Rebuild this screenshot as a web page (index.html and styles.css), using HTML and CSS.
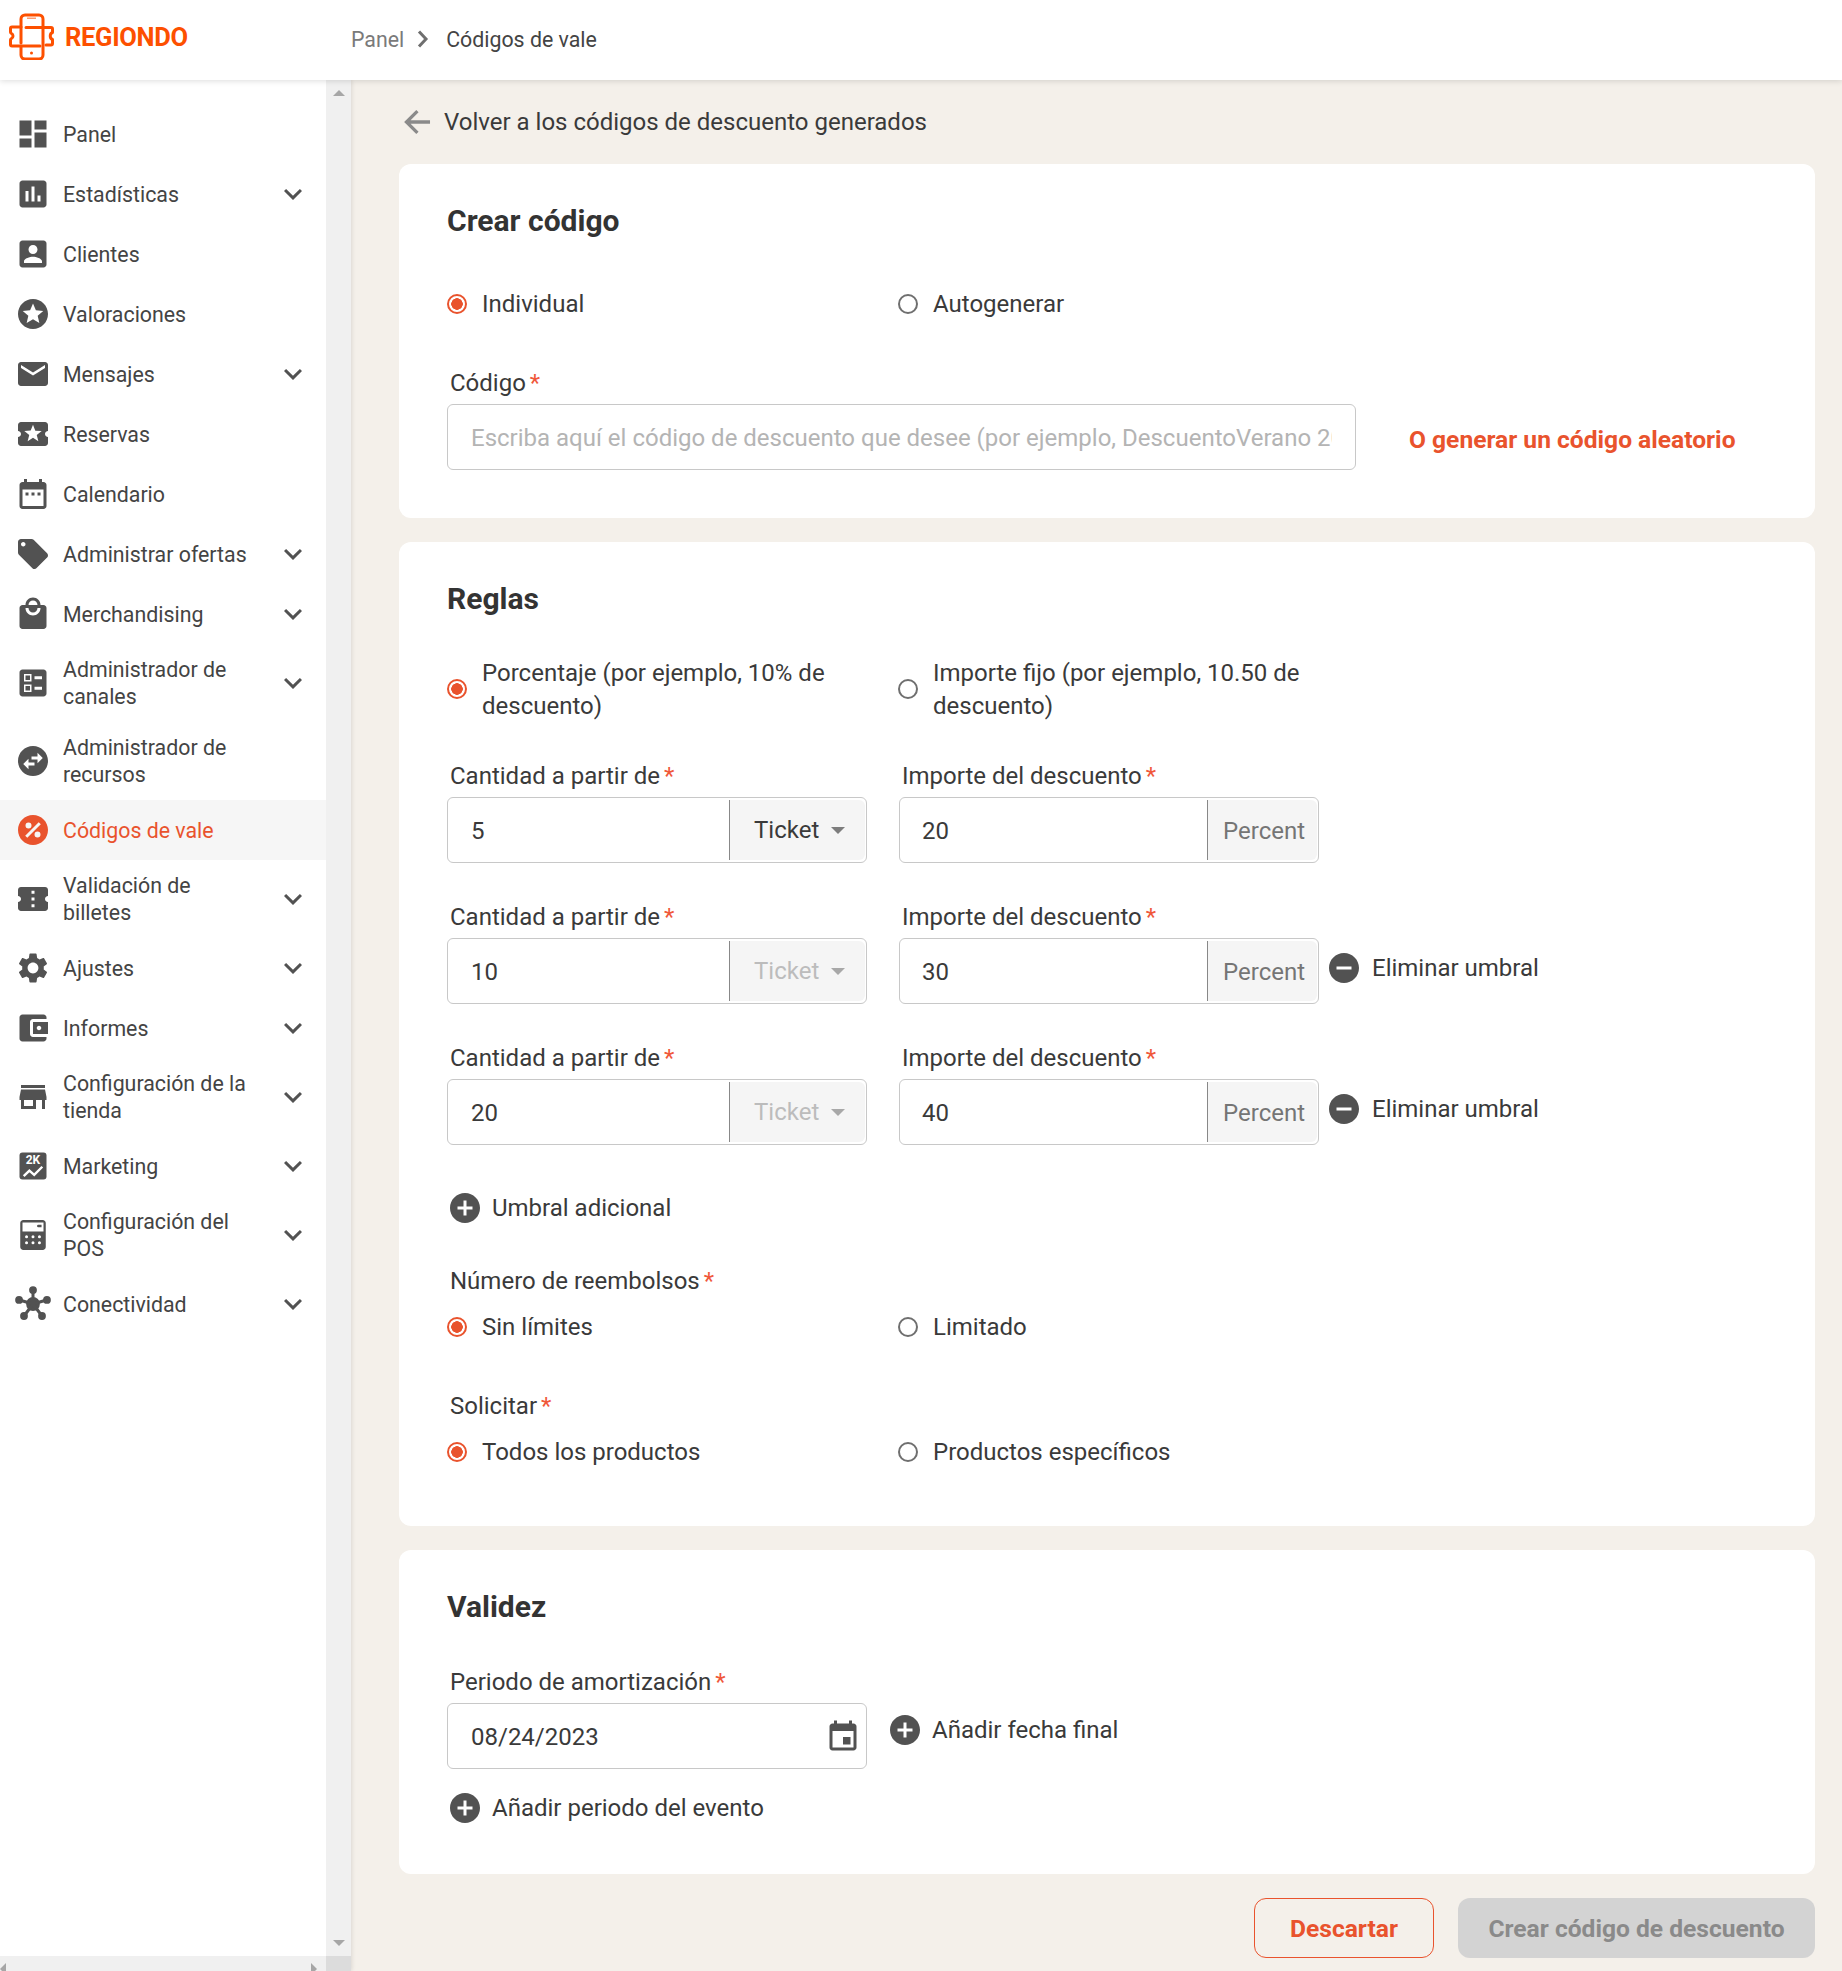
FILE: index.html
```html
<!DOCTYPE html>
<html lang="es">
<head>
<meta charset="utf-8">
<title>Códigos de vale</title>
<link rel="stylesheet" href="styles.css">
</head>
<body>
<svg class="sprite" width="0" height="0" aria-hidden="true">
  <symbol id="i-dashboard" viewBox="0 0 24 24"><path d="M3 13h8V3H3v10zm0 8h8v-6H3v6zm10 0h8V11h-8v10zm0-18v6h8V3h-8z"/></symbol>
  <symbol id="i-chart" viewBox="0 0 24 24"><path d="M19 3H5c-1.1 0-2 .9-2 2v14c0 1.1.9 2 2 2h14c1.1 0 2-.9 2-2V5c0-1.1-.9-2-2-2zM9 17H7v-7h2v7zm4 0h-2V7h2v10zm4 0h-2v-4h2v4z"/></symbol>
  <symbol id="i-account" viewBox="0 0 24 24"><path d="M3 5v14c0 1.1.89 2 2 2h14c1.1 0 2-.9 2-2V5c0-1.1-.9-2-2-2H5c-1.11 0-2 .9-2 2zm12 4c0 1.66-1.34 3-3 3s-3-1.34-3-3 1.34-3 3-3 3 1.34 3 3zm-9 8c0-2 4-3.1 6-3.1s6 1.1 6 3.1v1H6v-1z"/></symbol>
  <symbol id="i-stars" viewBox="0 0 24 24"><path d="M11.99 2C6.47 2 2 6.48 2 12s4.47 10 9.99 10C17.52 22 22 17.52 22 12S17.52 2 11.99 2zm4.24 16L12 15.45 7.77 18l1.12-4.81-3.73-3.23 4.92-.42L12 5l1.92 4.53 4.92.42-3.73 3.23L16.23 18z"/></symbol>
  <symbol id="i-email" viewBox="0 0 24 24"><path d="M20 4H4c-1.1 0-1.99.9-1.99 2L2 18c0 1.1.9 2 2 2h16c1.1 0 2-.9 2-2V6c0-1.1-.9-2-2-2zm0 4l-8 5-8-5V6l8 5 8-5v2z"/></symbol>
  <symbol id="i-activity" viewBox="0 0 24 24"><path d="M20 12c0-1.1.9-2 2-2V6c0-1.1-.9-2-2-2H4c-1.1 0-1.99.9-1.99 2v4c1.1 0 1.99.9 1.99 2s-.89 2-2 2v4c0 1.1.9 2 2 2h16c1.1 0 2-.9 2-2v-4c-1.1 0-2-.9-2-2zm-4.42 4.8L12 14.5l-3.58 2.3 1.08-4.12-3.29-2.69 4.24-.25L12 5.8l1.54 3.95 4.24.25-3.29 2.69 1.09 4.11z"/></symbol>
  <symbol id="i-range" viewBox="0 0 24 24"><path d="M9 11H7v2h2v-2zm4 0h-2v2h2v-2zm4 0h-2v2h2v-2zm2-7h-1V2h-2v2H8V2H6v2H5c-1.11 0-1.99.9-1.99 2L3 20c0 1.1.89 2 2 2h14c1.1 0 2-.9 2-2V6c0-1.1-.9-2-2-2zm0 16H5V9h14v11z"/></symbol>
  <symbol id="i-offer" viewBox="0 0 24 24"><path d="M21.41 11.58l-9-9C12.05 2.22 11.55 2 11 2H4c-1.1 0-2 .9-2 2v7c0 .55.22 1.05.59 1.42l9 9c.36.36.86.58 1.41.58.55 0 1.05-.22 1.41-.59l7-7c.37-.36.59-.86.59-1.41 0-.55-.23-1.06-.59-1.42zM5.5 7C4.67 7 4 6.33 4 5.5S4.67 4 5.5 4 7 4.67 7 5.5 6.33 7 5.5 7z"/></symbol>
  <symbol id="i-mall" viewBox="0 0 24 24"><path d="M19 6h-2c0-2.76-2.24-5-5-5S7 3.24 7 6H5c-1.1 0-1.99.9-1.99 2L3 20c0 1.1.9 2 2 2h14c1.1 0 2-.9 2-2V8c0-1.1-.9-2-2-2zm-7-3c1.66 0 3 1.34 3 3H9c0-1.66 1.34-3 3-3zm0 10c-2.76 0-5-2.24-5-5h2c0 1.66 1.34 3 3 3s3-1.34 3-3h2c0 2.76-2.24 5-5 5z"/></symbol>
  <symbol id="i-ballot" viewBox="0 0 24 24"><path fill-rule="evenodd" d="M13 9.5h5v-2h-5v2zm0 7h5v-2h-5v2zm6 4.5H5c-1.1 0-2-.9-2-2V5c0-1.1.9-2 2-2h14c1.1 0 2 .9 2 2v14c0 1.1-.9 2-2 2zM6 11h5V6H6v5zm1-4h3v3H7V7zM6 18h5v-5H6v5zm1-4h3v3H7v-3z"/></symbol>
  <symbol id="i-swap" viewBox="0 0 24 24"><path d="M22 12c0-5.52-4.48-10-10-10S2 6.48 2 12s4.48 10 10 10 10-4.48 10-10zm-7-5.5l3.5 3.5-3.5 3.5V11h-4V9h4V6.5zm-6 11L5.5 14 9 10.5V13h4v2H9v2.5z"/></symbol>
  <symbol id="i-percent" viewBox="0 0 24 24"><path fill-rule="evenodd" d="M12 2C6.48 2 2 6.48 2 12s4.48 10 10 10 10-4.48 10-10S17.52 2 12 2zM9 7a2 2 0 1 1 0 4 2 2 0 0 1 0-4zm6 6a2 2 0 1 1 0 4 2 2 0 0 1 0-4zM8.2 17.2l-1.4-1.4 9-9 1.4 1.4-9 9z"/></symbol>
  <symbol id="i-ticket" viewBox="0 0 24 24"><path d="M22 10V6c0-1.11-.9-2-2-2H4c-1.1 0-1.99.89-1.99 2v4c1.1 0 1.99.9 1.99 2s-.89 2-2 2v4c0 1.1.9 2 2 2h16c1.1 0 2-.9 2-2v-4c-1.1 0-2-.9-2-2s.9-2 2-2zm-9 7.5h-2v-2h2v2zm0-4.5h-2v-2h2v2zm0-4.5h-2v-2h2v2z"/></symbol>
  <symbol id="i-settings" viewBox="0 0 24 24"><path d="M19.14 12.94c.04-.3.06-.61.06-.94 0-.32-.02-.64-.07-.94l2.03-1.58c.18-.14.23-.41.12-.61l-1.92-3.32c-.12-.22-.37-.29-.59-.22l-2.39.96c-.5-.38-1.03-.7-1.62-.94l-.36-2.54c-.04-.24-.24-.41-.48-.41h-3.84c-.24 0-.43.17-.47.41l-.36 2.54c-.59.24-1.13.57-1.62.94l-2.39-.96c-.22-.08-.47 0-.59.22L2.74 8.87c-.12.21-.08.47.12.61l2.03 1.58c-.05.3-.09.63-.09.94s.02.64.07.94l-2.03 1.58c-.18.14-.23.41-.12.61l1.92 3.32c.12.22.37.29.59.22l2.39-.96c.5.38 1.03.7 1.62.94l.36 2.54c.05.24.24.41.48.41h3.84c.24 0 .44-.17.47-.41l.36-2.54c.59-.24 1.13-.56 1.62-.94l2.39.96c.22.08.47 0 .59-.22l1.92-3.32c.12-.22.07-.47-.12-.61l-2.01-1.58zM12 15.6c-1.98 0-3.6-1.62-3.6-3.6s1.62-3.6 3.6-3.6 3.6 1.62 3.6 3.6-1.62 3.6-3.6 3.6z"/></symbol>
  <symbol id="i-wallet" viewBox="0 0 24 24"><path d="M21 18v1c0 1.1-.9 2-2 2H5c-1.11 0-2-.9-2-2V5c0-1.1.89-2 2-2h14c1.1 0 2 .9 2 2v1h-9c-1.11 0-2 .9-2 2v8c0 1.1.89 2 2 2h9zm-9-2h10V8H12v8zm4-2.5c-.83 0-1.5-.67-1.5-1.5s.67-1.5 1.5-1.5 1.5.67 1.5 1.5-.67 1.5-1.5 1.5z"/></symbol>
  <symbol id="i-store" viewBox="0 0 24 24"><path d="M20 4H4v2h16V4zm1 10v-2l-1-5H4l-1 5v2h1v6h10v-6h4v6h2v-6h1zm-9 4H6v-4h6v4z"/></symbol>
  <symbol id="i-calc" viewBox="0 0 24 24"><path fill-rule="evenodd" d="M5.500 2h13c1.100 0 2 .9 2 2v16c0 1.100-.9 2-2 2h-13c-1.100 0-2-.9-2-2V4c0-1.100.9-2 2-2zm-.5 1.700v6h14v-6H5zm10.500 1.500h2.200v1.600h-2.200a.8.8 0 0 1 0-1.600zM7.700 12.200a1 1 0 1 0 0 2 1 1 0 0 0 0-2zm4.300 0a1 1 0 1 0 0 2 1 1 0 0 0 0-2zm4.300 0a1 1 0 1 0 0 2 1 1 0 0 0 0-2zm-8.600 4a1 1 0 1 0 0 2 1 1 0 0 0 0-2zm4.300 0a1 1 0 1 0 0 2 1 1 0 0 0 0-2zm4.300 0a1 1 0 1 0 0 2 1 1 0 0 0 0-2z"/></symbol>
  <symbol id="i-hub" viewBox="0 0 24 24"><circle cx="12" cy="12" r="4.600"/><circle cx="12" cy="2.700" r="2.600"/><circle cx="2.700" cy="9.300" r="2.600"/><circle cx="21.300" cy="9.300" r="2.600"/><circle cx="6" cy="20" r="2.600"/><circle cx="18" cy="20" r="2.600"/><path d="M12 3v9M3 9.300l9 2.700M21 9.300l-9 2.700M6 20l6-8M18 20l-6-8" fill="none" stroke="#525252" stroke-width="2"/></symbol>
  <symbol id="i-chevron" viewBox="0 0 24 24"><path d="M16.59 8.59L12 13.17 7.41 8.59 6 10l6 6 6-6z"/></symbol>
  <symbol id="i-plus" viewBox="0 0 24 24"><path fill-rule="evenodd" d="M12 2C6.48 2 2 6.48 2 12s4.48 10 10 10 10-4.48 10-10S17.52 2 12 2zm5 11h-4v4h-2v-4H7v-2h4V7h2v4h4v2z"/></symbol>
  <symbol id="i-minus" viewBox="0 0 24 24"><path fill-rule="evenodd" d="M12 2C6.48 2 2 6.48 2 12s4.48 10 10 10 10-4.48 10-10S17.52 2 12 2zm5 11H7v-2h10v2z"/></symbol>
  <symbol id="i-event" viewBox="0 0 24 24"><path d="M17 12h-5v5h5v-5zM16 1v2H8V1H6v2H5c-1.110 0-1.990.9-1.990 2L3 19c0 1.100.89 2 2 2h14c1.100 0 2-.9 2-2V5c0-1.100-.9-2-2-2h-1V1h-2zm3 18H5V8h14v11z"/></symbol>
</svg>

<header class="topbar">
  <div class="brand">
    <svg class="brand-mark" viewBox="0 0 60 60" aria-hidden="true">
      <g fill="none" stroke="#fd5000" stroke-width="3" stroke-linecap="round" stroke-linejoin="round">
        <path d="M21 43V19a4 4 0 0 1 4-4h14a4 4 0 0 1 4 4v7"/>
        <path d="M43 29v26a4 4 0 0 1-4 4H25a4 4 0 0 1-4-4v-8"/>
        <path d="M21 27h-9a1.500 1.500 0 0 0-1.500 1.500v3.500a2 2 0 0 0 1 1.500c2 1 2 4 0 5a2 2 0 0 0-1 1.500v4.500a1.500 1.500 0 0 0 1.500 1.500h28"/>
        <path d="M26 27.500h25a1.500 1.500 0 0 1 1.500 1.500v3.500c-3 1-3 6 0 7v4a1.500 1.500 0 0 1-1.500 1.500h-5"/>
      </g>
      <rect x="27" y="17.500" width="9" height="1.500" fill="#fd9a70"/>
      <circle cx="31.500" cy="53" r="1.500" fill="#fd5000"/>
    </svg>
    <span class="brand-name">REGIONDO</span>
  </div>
  <nav class="crumbs">
    <span class="crumb-root">Panel</span>
    <svg class="crumb-sep" viewBox="0 0 12 18" aria-hidden="true"><path d="M2 1.500l7 7.500-7 7.500" fill="none" stroke="#6f6f6f" stroke-width="3"/></svg>
    <span>Códigos de vale</span>
  </nav>
</header>

<div class="shell">
  <aside class="sidebar">
    <ul class="nav">
      <li class="nav-item"><svg class="nav-icon"><use href="#i-dashboard"/></svg><span class="nav-text">Panel</span></li>
      <li class="nav-item"><svg class="nav-icon"><use href="#i-chart"/></svg><span class="nav-text">Estadísticas</span><svg class="nav-chev"><use href="#i-chevron"/></svg></li>
      <li class="nav-item"><svg class="nav-icon"><use href="#i-account"/></svg><span class="nav-text">Clientes</span></li>
      <li class="nav-item"><svg class="nav-icon"><use href="#i-stars"/></svg><span class="nav-text">Valoraciones</span></li>
      <li class="nav-item"><svg class="nav-icon"><use href="#i-email"/></svg><span class="nav-text">Mensajes</span><svg class="nav-chev"><use href="#i-chevron"/></svg></li>
      <li class="nav-item"><svg class="nav-icon"><use href="#i-activity"/></svg><span class="nav-text">Reservas</span></li>
      <li class="nav-item"><svg class="nav-icon"><use href="#i-range"/></svg><span class="nav-text">Calendario</span></li>
      <li class="nav-item"><svg class="nav-icon"><use href="#i-offer"/></svg><span class="nav-text">Administrar ofertas</span><svg class="nav-chev"><use href="#i-chevron"/></svg></li>
      <li class="nav-item"><svg class="nav-icon"><use href="#i-mall"/></svg><span class="nav-text">Merchandising</span><svg class="nav-chev"><use href="#i-chevron"/></svg></li>
      <li class="nav-item two"><svg class="nav-icon"><use href="#i-ballot"/></svg><span class="nav-text">Administrador de canales</span><svg class="nav-chev"><use href="#i-chevron"/></svg></li>
      <li class="nav-item two"><svg class="nav-icon"><use href="#i-swap"/></svg><span class="nav-text">Administrador de recursos</span></li>
      <li class="nav-item active"><svg class="nav-icon"><use href="#i-percent"/></svg><span class="nav-text">Códigos de vale</span></li>
      <li class="nav-item two"><svg class="nav-icon"><use href="#i-ticket"/></svg><span class="nav-text">Validación de billetes</span><svg class="nav-chev"><use href="#i-chevron"/></svg></li>
      <li class="nav-item"><svg class="nav-icon"><use href="#i-settings"/></svg><span class="nav-text">Ajustes</span><svg class="nav-chev"><use href="#i-chevron"/></svg></li>
      <li class="nav-item"><svg class="nav-icon"><use href="#i-wallet"/></svg><span class="nav-text">Informes</span><svg class="nav-chev"><use href="#i-chevron"/></svg></li>
      <li class="nav-item two"><svg class="nav-icon"><use href="#i-store"/></svg><span class="nav-text">Configuración de la tienda</span><svg class="nav-chev"><use href="#i-chevron"/></svg></li>
      <li class="nav-item"><svg class="nav-icon" viewBox="0 0 24 24"><rect x="3" y="3" width="18" height="18" rx="2"/><text class="icon-label" x="12" y="10.800" text-anchor="middle">2K</text><path d="M5.800 18.800l3.800-3.700 3.200 2.800 5.400-5.400" fill="none" stroke="#fff" stroke-width="1.600"/></svg><span class="nav-text">Marketing</span><svg class="nav-chev"><use href="#i-chevron"/></svg></li>
      <li class="nav-item two"><svg class="nav-icon"><use href="#i-calc"/></svg><span class="nav-text">Configuración del POS</span><svg class="nav-chev"><use href="#i-chevron"/></svg></li>
      <li class="nav-item"><svg class="nav-icon"><use href="#i-hub"/></svg><span class="nav-text">Conectividad</span><svg class="nav-chev"><use href="#i-chevron"/></svg></li>
    </ul>
    <div class="vbar"><i class="arrow up"></i><i class="arrow down"></i></div>
    <div class="hbar"><i class="arrow left"></i><i class="arrow right"></i></div>
    <div class="corner"></div>
  </aside>

  <main class="main">
    <a class="back">
      <svg class="back-icon" viewBox="0 0 24 24" aria-hidden="true"><path d="M22.300 12H3M11.500 2.600L2.100 12l9.400 9.400" fill="none" stroke="#8a8a8a" stroke-width="2.800"/></svg>
      <span>Volver a los códigos de descuento generados</span>
    </a>

    <section class="card card-code">
      <h2 class="card-title">Crear código</h2>
      <div class="radios first">
        <label class="radio on">Individual</label>
        <label class="radio">Autogenerar</label>
      </div>
      <div class="label first-label">Código<em>*</em></div>
      <div class="code-row">
        <input class="input code-input" type="text" placeholder="Escriba aquí el código de descuento que desee (por ejemplo, DescuentoVerano 2023)">
        <a class="gen-link">O generar un código aleatorio</a>
      </div>
    </section>

    <section class="card card-rules">
      <h2 class="card-title">Reglas</h2>
      <div class="radios wrap">
        <label class="radio on">Porcentaje (por ejemplo, 10% de descuento)</label>
        <label class="radio">Importe fijo (por ejemplo, 10.50 de descuento)</label>
      </div>

      <div class="tier">
        <div class="field">
          <div class="label">Cantidad a partir de<em>*</em></div>
          <div class="group"><input class="group-input" type="text" value="5"><div class="addon select">Ticket<i class="caret"></i></div></div>
        </div>
        <div class="field">
          <div class="label">Importe del descuento<em>*</em></div>
          <div class="group"><input class="group-input" type="text" value="20"><div class="addon unit">Percent</div></div>
        </div>
      </div>
      <div class="tier">
        <div class="field">
          <div class="label">Cantidad a partir de<em>*</em></div>
          <div class="group"><input class="group-input" type="text" value="10"><div class="addon select off">Ticket<i class="caret"></i></div></div>
        </div>
        <div class="field">
          <div class="label">Importe del descuento<em>*</em></div>
          <div class="group"><input class="group-input" type="text" value="30"><div class="addon unit">Percent</div></div>
        </div>
        <a class="action tier-action"><svg class="action-icon"><use href="#i-minus"/></svg>Eliminar umbral</a>
      </div>
      <div class="tier">
        <div class="field">
          <div class="label">Cantidad a partir de<em>*</em></div>
          <div class="group"><input class="group-input" type="text" value="20"><div class="addon select off">Ticket<i class="caret"></i></div></div>
        </div>
        <div class="field">
          <div class="label">Importe del descuento<em>*</em></div>
          <div class="group"><input class="group-input" type="text" value="40"><div class="addon unit">Percent</div></div>
        </div>
        <a class="action tier-action"><svg class="action-icon"><use href="#i-minus"/></svg>Eliminar umbral</a>
      </div>

      <a class="action more"><svg class="action-icon"><use href="#i-plus"/></svg>Umbral adicional</a>

      <div class="label refunds">Número de reembolsos<em>*</em></div>
      <div class="radios tight">
        <label class="radio on">Sin límites</label>
        <label class="radio">Limitado</label>
      </div>
      <div class="label applies">Solicitar<em>*</em></div>
      <div class="radios tight">
        <label class="radio on">Todos los productos</label>
        <label class="radio">Productos específicos</label>
      </div>
    </section>

    <section class="card card-valid">
      <h2 class="card-title">Validez</h2>
      <div class="label period">Periodo de amortización<em>*</em></div>
      <div class="date-row">
        <div class="date-box"><span>08/24/2023</span><svg class="date-icon"><use href="#i-event"/></svg></div>
        <a class="action date-action"><svg class="action-icon"><use href="#i-plus"/></svg>Añadir fecha final</a>
      </div>
      <a class="action event"><svg class="action-icon"><use href="#i-plus"/></svg>Añadir periodo del evento</a>
    </section>

    <div class="footer">
      <button class="btn ghost" type="button">Descartar</button>
      <button class="btn muted" type="button">Crear código de descuento</button>
    </div>
  </main>
</div>
</body>
</html>
```

FILE: styles.css
```css
*, *::before, *::after { box-sizing: border-box; }
html, body { margin: 0; padding: 0; height: 1971px; overflow: hidden; }
body {
  font-family: Roboto, "Liberation Sans", sans-serif;
  font-size: 24px;
  color: #3a3a3a;
  background: #f4f0ea;
  display: flex;
  flex-direction: column;
}
.sprite { position: absolute; }
a { color: inherit; text-decoration: none; }

.topbar {
  height: 80px;
  flex: none;
  background: #fff;
  display: flex;
  align-items: center;
  position: relative;
  z-index: 2;
  box-shadow: 0 1px 6px rgba(0, 0, 0, .14);
}
.brand { width: 351px; height: 60px; display: flex; align-items: center; flex: none; align-self: flex-start; }
.brand-mark { width: 60px; height: 60px; flex: none; }
.brand-name { font-size: 25.500px; font-weight: 700; color: #fd5000; margin-left: 5px; letter-spacing: -.3px; margin-top: 14px; }
.crumbs { display: flex; align-items: center; font-size: 21.330px; color: #444; margin-top: -2px; }
.crumb-root { color: #7a7a7a; }
.crumb-sep { width: 12px; height: 18px; margin: 0 17px 0 13px; }

.shell { flex: 1; display: flex; min-height: 0; }
.sidebar {
  width: 351px;
  flex: none;
  display: grid;
  grid-template-columns: 326px 25px;
  grid-template-rows: 1fr 15px;
  background: #fff;
  box-shadow: 1px 0 4px rgba(0, 0, 0, .1);
}
.nav { list-style: none; margin: 0; padding: 24px 0 0; overflow: hidden; }
.nav-item {
  height: 60px;
  display: flex;
  align-items: center;
  padding: 0 15px;
  font-size: 21.330px;
  line-height: 27px;
  color: #444;
}
.nav-item.two { height: 78px; }
.nav-item.active { background: #f6f6f6; color: #e9532d; }
.nav-icon { width: 36px; height: 36px; fill: #525252; flex: none; }
.active .nav-icon { fill: #e9532d; }
.nav-text { margin-left: 12px; width: 192px; }
.nav-chev { width: 36px; height: 36px; fill: #525252; margin-left: auto; flex: none; }
.icon-label { font: 700 8px Roboto, "Liberation Sans", sans-serif; fill: #fff; }

.vbar { background: #f0f0f0; position: relative; }
.hbar { background: #f0f0f0; position: relative; }
.corner { background: #dcdcdc; }
.arrow { position: absolute; width: 0; height: 0; border: 0 solid transparent; }
.arrow.up { top: 10px; left: 7px; border-width: 0 6px 6px; border-bottom-color: #a6a6a6; }
.arrow.down { bottom: 10px; left: 7px; border-width: 6px 6px 0; border-top-color: #a6a6a6; }
.arrow.left { left: 0; top: 7px; border-width: 6px 6px 6px 0; border-right-color: #a6a6a6; }
.arrow.right { right: 9px; top: 7px; border-width: 6px 0 6px 6px; border-left-color: #a6a6a6; }

.main { flex: 1; min-width: 0; padding: 0 27px 0 48px; }
.back { height: 84px; display: flex; align-items: center; margin-left: 5px; }
.back-icon { width: 28px; height: 28px; margin-right: 12px; flex: none; }

.card { background: #fff; border-radius: 12px; padding: 0 48px; margin-bottom: 24px; }
.card-code { height: 354px; }
.card-rules { height: 984px; }
.card-valid { height: 324px; }
.card-title { margin: 0; padding-top: 39px; height: 75px; font-size: 30px; line-height: 36px; font-weight: 700; color: #333; }

.radios { display: grid; grid-template-columns: 451px 451px; align-items: center; }
.radios.first { margin-top: 47px; height: 36px; }
.radios.wrap { margin-top: 39px; height: 66px; }
.radios.tight { height: 36px; margin-top: 13px; }
.radio { display: flex; align-items: center; position: relative; padding-left: 35px; line-height: 33px; max-width: 420px; }
.radios.wrap .radio { padding-top: 1px; }
.radio::before {
  content: "";
  position: absolute;
  left: 0;
  top: 50%;
  width: 20px;
  height: 20px;
  margin-top: -10px;
  border: 2px solid #6f6f6f;
  border-radius: 50%;
  background: #fff;
}
.radios.wrap .radio::before { margin-top: -11px; }
.radio.on::before { border-color: #e9532d; background: radial-gradient(circle, #e9532d 0 5.500px, #fff 6px); }

.label { padding-left: 3px; line-height: 30px; height: 30px; margin-bottom: 6px; }
.label em { font-style: normal; color: #f0573a; margin-left: 4px; }
.first-label { margin-top: 46px; }

.input, .group-input {
  font: inherit;
  color: inherit;
  border: 0;
  outline: 0;
  background: transparent;
}
.code-row { display: flex; align-items: center; }
.code-input {
  width: 909px;
  height: 66px;
  flex: none;
  border: 1px solid #c8c8c8;
  border-radius: 6px;
  padding: 2px 23px 0 23px;
  background: #fff;
}
.code-input::placeholder { color: #b4b4b4; opacity: 1; }
.gen-link { margin-left: 53px; margin-top: 4px; color: #e9532d; font-weight: 700; font-size: 24.600px; white-space: nowrap; }

.tier { display: flex; align-items: flex-end; height: 141px; }
.tier .field + .field { margin-left: 32px; }
.group {
  width: 420px;
  height: 66px;
  display: flex;
  border: 1px solid #c8c8c8;
  border-radius: 6px;
  padding: 2px 1px 2px 2px;
}
.group-input { flex: 1; min-width: 0; padding-left: 21px; padding-top: 2px; }
.field + .field .group-input { padding-left: 20px; }
.addon { background: #f5f5f5; border-left: 1px solid #888; border-radius: 0 6px 6px 0; display: flex; align-items: center; flex: none; }
.select { width: 136px; padding-left: 24px; }
.select.off { color: #bcbcbc; }
.unit { width: 110px; padding-left: 15px; padding-top: 2px; color: #757575; }
.caret { margin-left: 12px; margin-top: 1px; border: solid transparent; border-width: 7px 7px 0; border-top-color: #7d7d7d; }
.off .caret { border-top-color: #a8a8a8; }

.action { display: flex; align-items: center; line-height: 30px; }
.action-icon { width: 36px; height: 36px; fill: #525252; margin-right: 9px; flex: none; }
.tier-action { margin-left: 7px; height: 66px; margin-bottom: 3px; }
.tier-action .action-icon { margin-right: 10px; }
.more { margin-top: 45px; height: 36px; }
.refunds { margin-top: 40px; }
.applies { margin-top: 46px; margin-bottom: 7px; }

.period { margin-top: 42px; }
.date-row { display: flex; align-items: flex-start; }
.date-box {
  width: 420px;
  height: 66px;
  flex: none;
  border: 1px solid #c8c8c8;
  border-radius: 6px;
  display: flex;
  align-items: center;
  justify-content: space-between;
  padding: 2px 5px 0 23px;
}
.date-icon { width: 36px; height: 36px; fill: #525252; }
.date-action { margin-left: 20px; margin-top: 9px; height: 36px; }
.event { margin-top: 21px; height: 36px; }

.footer { display: flex; justify-content: flex-end; gap: 24px; }
.btn { height: 60px; border-radius: 12px; font: 700 24.600px Roboto, "Liberation Sans", sans-serif; border: 0; }
.btn.ghost { width: 180px; background: transparent; border: 1px solid #e9532d; color: #e9532d; }
.btn.muted { width: 357px; background: #d3d3d3; color: #8a8a8a; }
```
